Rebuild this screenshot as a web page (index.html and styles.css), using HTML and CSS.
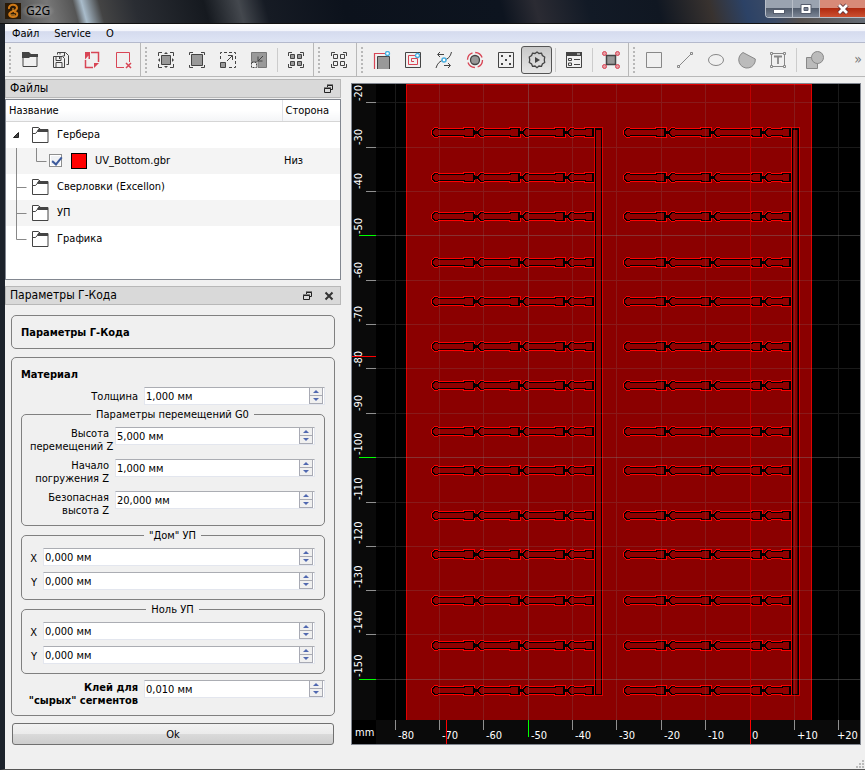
FILE: index.html
```html
<!DOCTYPE html>
<html lang="ru">
<head>
  <meta charset="UTF-8" />
  <meta name="viewport" content="width=device-width, initial-scale=1.0"/>
  <title>G2G</title>
  <link rel="stylesheet" href="styles.css">
</head>
<body>
<div class="window">
  <header class="titlebar">
    <svg class="logo" width="16" height="16" viewBox="0 0 16 16"><rect width="16" height="16" fill="#2a1a08"/><path d="M4 6C3 1 12 0 12 5C12 8 8 8 6 9C3 11 4 14 8 14C13 14 14 9 9 9" fill="none" stroke="#d07a18" stroke-width="2"/><path d="M8 5v3M5 12h5" stroke="#f0a030"/></svg>
    <h1>G2G</h1>
    <div class="win-buttons">
      <button class="win-min" aria-label="Minimize"><svg width="14" height="12"><rect x="1.5" y="6.5" width="11" height="4" fill="#fff" stroke="#555c6c"/></svg></button>
      <button class="win-max" aria-label="Maximize"><svg width="14" height="12"><path d="M2 1.5h10v9H2z" fill="#fff" stroke="#555c6c"/><path d="M5 4.500h4v3H5z" fill="#7c8494" stroke="#555c6c"/></svg></button>
      <button class="win-close" aria-label="Close"><svg width="14" height="12"><path d="M3 2l8 8M11 2l-8 8" stroke="#5a3038" stroke-width="4.500"/><path d="M3 2l8 8M11 2l-8 8" stroke="#fff" stroke-width="2.800"/></svg></button>
    </div>
  </header>

  <nav class="menubar">
    <button>Файл</button>
    <button>Service</button>
    <button>О</button>
  </nav>

  <div class="toolbars">
    <div class="toolbar">
      <span class="handle"></span>
      <button aria-label="Open"><svg width="18" height="18"><path d="M2 5v10.500h14V5.500H2" fill="none" stroke="#444"/><path d="M1 1h7l2 2h7v3H9L8 7H1z" fill="#444"/></svg></button>
      <button aria-label="Save all"><svg width="18" height="18" fill="none" stroke="#444"><path d="M1.500 5.500h9l2 2v9h-11z M4 5.500v4h5v-4 M4 16v-4.500h6V16 M7.500 6v2"/><path d="M5.500 3.500v-2h8l3 3v9h-2 M8 1.500v2 M12.500 2v3h-2"/></svg></button>
      <button aria-label="Save selected"><svg width="18" height="18"><path d="M8 1.500h7.500V11M2.500 9v7.500H10" fill="none" stroke="#d84555" stroke-width="1.500"/><path d="M2 1h5v7H5.500V4.500L2 8.500zM16 12l-5 5v-5z" fill="#d84555"/></svg></button>
      <button aria-label="Close file"><svg width="18" height="18" fill="none" stroke="#d84555"><path d="M15.500 11V1.500h-13v15H10"/><path d="M12 12l5 5M17 12l-5 5" stroke-width="1.500"/></svg></button>
    </div>
    <div class="toolbar">
      <span class="handle"></span>
      <button aria-label="Zoom fit"><svg width="18" height="18"><path d="M1.500 5V1.500H5M13 1.500h3.500V5M16.500 13v3.500H13M5 16.500H1.500V13" fill="none" stroke="#444"/><path d="M4.500 4.500h9v9h-9z" fill="#999" stroke="#444"/><path d="M7 3h4L9 1zM7 15h4l-2 2zM3 7v4L1 9zM15 7v4l2-2z" fill="#444"/></svg></button>
      <button aria-label="Zoom 100%"><svg width="18" height="18"><path d="M1.500 4V1.500H5M13 1.500h3.500V4M16.500 14v2.500H13M5 16.500H1.500V14" fill="none" stroke="#444"/><path d="M3.500 3.500h11v11h-11z" fill="#999" stroke="#444"/></svg></button>
      <button aria-label="Zoom in"><svg width="18" height="18"><path d="M1.500 8V1.500h15v15H9" fill="none" stroke="#444" stroke-dasharray="3 2"/><path d="M1.500 11.500h5v5h-5z" fill="#999" stroke="#444"/><path d="M8 10l5-5M9 4.500h4.500V9" fill="none" stroke="#444"/></svg></button>
      <button aria-label="Zoom out"><svg width="18" height="18"><path d="M1.500 1.500h15v15H8v-6H1.500z" fill="#999" stroke="#777"/><path d="M1.500 11.500h5v5h-5z" fill="#f0f0f0" stroke="#444" stroke-dasharray="2 1"/><path d="M13 5L8 10M8 5.500v4.500h4.500" fill="none" stroke="#444"/></svg></button>
      <span class="sep"></span>
      <button aria-label="Select all"><svg width="18" height="18"><path d="M1.500 5V1.500H5M13 1.500h3.500V5M16.500 13v3.500H13M5 16.500H1.500V13" fill="none" stroke="#444"/><path d="M3.500 3.500h4v4h-4zM10.500 3.500h4v4h-4zM3.500 10.500h4v4h-4zM10.500 10.500h4v4h-4z" fill="#999" stroke="#444"/></svg></button>
    </div>
    <div class="toolbar">
      <span class="handle"></span>
      <button aria-label="Deselect"><svg width="18" height="18" fill="none" stroke="#444"><path d="M1.500 5V1.500H5M13 1.500h3.500V5M16.500 13v3.500H13M5 16.500H1.500V13"/><path d="M3.500 3.500h4v4h-4zM10.500 3.500h4v4h-4zM3.500 10.500h4v4h-4zM10.500 10.500h4v4h-4z"/></svg></button>
    </div>
    <div class="toolbar">
      <span class="handle"></span>
      <button aria-label="Profile"><svg width="18" height="18"><path d="M1.500 18V2.500H13" fill="none" stroke="#d84555" stroke-width="1.200"/><path d="M4.500 18V5.500h12V18z" fill="#999"/><path d="M4.500 18V5.500h12V18" fill="none" stroke="#444"/><circle cx="14.500" cy="2.500" r="2" fill="#fff" stroke="#46aee0" stroke-width="1.300"/></svg></button>
      <button aria-label="Pocket"><svg width="18" height="18" fill="none"><path d="M1.500 1.500h15v15h-15z" stroke="#444"/><path d="M12 4.500H4.500v9h9V7.500H7.500v3H10" stroke="#d84555"/><circle cx="13.500" cy="4.500" r="2" fill="#fff" stroke="#46aee0" stroke-width="1.300"/></svg></button>
      <button aria-label="Raster"><svg width="18" height="18" fill="none" stroke="#444"><path d="M1 17Q3 10 9 9T16.500 1M3 3.500h6M9 14.500h6"/><path d="M5 1L2.500 3.500 5 6M13 12l2.500 2.500L13 17"/><circle cx="9" cy="9" r="2" fill="#fff" stroke="#46aee0" stroke-width="1.500"/></svg></button>
      <button aria-label="Drill"><svg width="18" height="18"><circle cx="9" cy="9" r="7.500" fill="none" stroke="#d84555" stroke-width="1.300" stroke-dasharray="9 2.780"/><circle cx="9" cy="9" r="4.500" fill="#999" stroke="#444" stroke-width="1.300"/></svg></button>
      <button aria-label="Voronoi"><svg width="18" height="18"><path d="M1.500 1.500h15v15h-15z" fill="none" stroke="#444"/><path d="M4 4h2v2H4zM12 4h2v2h-2zM8 8h2v2H8zM4 12h2v2H4zM12 12h2v2h-2z" fill="#444"/></svg></button>
      <button class="pressed" aria-label="G-code properties"><svg width="18" height="18"><path d="M9 1l2 1.500 2.500-.3.900 2.300L16.700 6l-.4 3 .4 2.500-2.300 1.500-.900 2.300-2.500-.3L9 16.700 7 15l-2.500.3-.900-2.300-2.300-1.500.4-2.500-.4-3 2.300-1.500.900-2.300L7 2.500z" fill="none" stroke="#444" stroke-width="1.300"/><path d="M7 6l5 3-5 3z" fill="#444"/></svg></button>
      <span class="sep"></span>
      <button aria-label="Tool base"><svg width="18" height="18"><path d="M1.500 1.500h15v15h-15z" fill="none" stroke="#444"/><path d="M1 1h16v4H1z" fill="#444"/><path d="M12 3h3" stroke="#fff"/><path d="M3.500 7.500h3v2h-3zM3.500 12h3v2.500h-3z" fill="none" stroke="#444"/><path d="M9 8.500h6M9 13.500h6" stroke="#444"/></svg></button>
      <span class="sep"></span>
      <button aria-label="Snap"><svg width="18" height="18"><path d="M4.500 4.500h9v9h-9z" fill="#999" stroke="#444" stroke-width="1.500"/><g fill="#e79aa2" stroke="#d84555"><circle cx="2.500" cy="2.500" r="2"/><circle cx="15.500" cy="2.500" r="2"/><circle cx="2.500" cy="15.500" r="2"/><circle cx="15.500" cy="15.500" r="2"/></g></svg></button>
    </div>
    <div class="toolbar toolbar-last">
      <span class="handle"></span>
      <button aria-label="Rectangle"><svg width="18" height="18"><path d="M1.500 1.500h15v15h-15z" fill="none" stroke="#888"/></svg></button>
      <button aria-label="Line"><svg width="18" height="18" fill="none" stroke="#888"><path d="M3 15L15 3M1.500 14.500h2v2h-2zM14.500 1.500h2v2h-2z"/></svg></button>
      <button aria-label="Ellipse"><svg width="18" height="18"><ellipse cx="9" cy="9" rx="7.500" ry="5.500" fill="none" stroke="#888"/></svg></button>
      <button aria-label="Arc"><svg width="18" height="18"><path d="M5 1.500A8.300 8.300 0 1 0 17.300 8z" fill="#bbb" stroke="#888"/></svg></button>
      <button aria-label="Text"><svg width="18" height="18" fill="none" stroke="#888"><path d="M2.500 2.500h13v13h-13z"/><path d="M1.500 1.500h2v2h-2zM14.500 1.500h2v2h-2zM1.500 14.500h2v2h-2zM14.500 14.500h2v2h-2z" fill="#f0f0f0"/><path d="M5 5.500h8M9 5v8" stroke-width="1.800"/></svg></button>
      <span class="sep"></span>
      <button aria-label="Union"><svg width="18" height="18" fill="#bbb" stroke="#888"><path d="M.5 6.500h11v11H.500z"/><circle cx="11.500" cy="6.500" r="6"/></svg></button>
      <button class="more" aria-label="More tools">»</button>
    </div>
  </div>

  <main class="workspace">
    <aside class="docks">
      <section class="dock-files">
        <h2 class="dock-title"><span>Файлы</span>
          <button aria-label="Float"><svg width="10" height="10" fill="none" stroke="#222"><path d="M3.500 3V1.500h5v4H7M3 1h6M.500 4.500h6v4h-6zM0 4h7"/></svg></button>
        </h2>
        <div class="tree">
          <table>
            <thead><tr><th>Название</th><th class="side">Сторона</th></tr></thead>
            <tbody>
              <tr><td><div class="node"><svg class="branch" width="26" height="26"><path d="M7.500 15.500h5v-5z" fill="#444" stroke="#222"/></svg><svg class="folder" width="17" height="16"><use href="#folder"/></svg>Гербера</div></td><td></td></tr>
              <tr><td><div class="node"><svg class="branch-child" width="43" height="26"><path d="M10.500 0v26M30.500 0v13.500h10" fill="none" stroke="#888"/></svg><input type="checkbox" id="f1" checked><span class="swatch"></span><label for="f1">UV_Bottom.gbr</label></div></td><td>Низ</td></tr>
              <tr><td><div class="node"><svg class="branch" width="26" height="26"><path d="M10.500 0v26M10.500 13.500h10" stroke="#888"/></svg><svg class="folder" width="17" height="16"><use href="#folder"/></svg>Сверловки (Excellon)</div></td><td></td></tr>
              <tr><td><div class="node"><svg class="branch" width="26" height="26"><path d="M10.500 0v26M10.500 13.500h10" stroke="#888"/></svg><svg class="folder" width="17" height="16"><use href="#folder"/></svg>УП</div></td><td></td></tr>
              <tr><td><div class="node"><svg class="branch" width="26" height="26"><path d="M10.500 0v13.500h10" fill="none" stroke="#888"/></svg><svg class="folder" width="17" height="16"><use href="#folder"/></svg>Графика</div></td><td></td></tr>
            </tbody>
          </table>
        </div>
      </section>

      <section class="dock-params">
        <h2 class="dock-title"><span>Параметры Г-Кода</span>
          <button aria-label="Float"><svg width="10" height="10" fill="none" stroke="#222"><path d="M3.500 3V1.500h5v4H7M3 1h6M.500 4.500h6v4h-6zM0 4h7"/></svg></button>
          <button aria-label="Close"><svg width="10" height="10"><path d="M1.500 1.500l7 7M8.500 1.500l-7 7" stroke="#333" stroke-width="2"/></svg></button>
        </h2>
        <form class="params" onsubmit="return false">
          <div class="box box-name"><h3>Параметры Г-Кода</h3></div>
          <div class="box box-material">
            <h3>Материал</h3>
            <div class="field field-wide">
              <label for="thick">Толщина</label>
              <div class="spin"><input id="thick" type="text" value="1,000 мм"><div class="steps"><button type="button" aria-label="Up"></button><button type="button" aria-label="Down"></button></div></div>
            </div>
            <fieldset class="g0">
              <legend>Параметры перемещений G0</legend>
              <div class="field">
                <label for="clear">Высота<br>перемещений Z</label>
                <div class="spin"><input id="clear" type="text" value="5,000 мм"><div class="steps"><button type="button" aria-label="Up"></button><button type="button" aria-label="Down"></button></div></div>
              </div>
              <div class="field">
                <label for="plunge">Начало<br>погружения Z</label>
                <div class="spin"><input id="plunge" type="text" value="1,000 мм"><div class="steps"><button type="button" aria-label="Up"></button><button type="button" aria-label="Down"></button></div></div>
              </div>
              <div class="field">
                <label for="safe">Безопасная<br>высота Z</label>
                <div class="spin"><input id="safe" type="text" value="20,000 мм"><div class="steps"><button type="button" aria-label="Up"></button><button type="button" aria-label="Down"></button></div></div>
              </div>
            </fieldset>
            <fieldset class="point">
              <legend>"Дом" УП</legend>
              <div class="field">
                <label for="homeX">X</label>
                <div class="spin"><input id="homeX" type="text" value="0,000 мм"><div class="steps"><button type="button" aria-label="Up"></button><button type="button" aria-label="Down"></button></div></div>
              </div>
              <div class="field">
                <label for="homeY">Y</label>
                <div class="spin"><input id="homeY" type="text" value="0,000 мм"><div class="steps"><button type="button" aria-label="Up"></button><button type="button" aria-label="Down"></button></div></div>
              </div>
            </fieldset>
            <fieldset class="point">
              <legend>Ноль УП</legend>
              <div class="field">
                <label for="zeroX">X</label>
                <div class="spin"><input id="zeroX" type="text" value="0,000 мм"><div class="steps"><button type="button" aria-label="Up"></button><button type="button" aria-label="Down"></button></div></div>
              </div>
              <div class="field">
                <label for="zeroY">Y</label>
                <div class="spin"><input id="zeroY" type="text" value="0,000 мм"><div class="steps"><button type="button" aria-label="Up"></button><button type="button" aria-label="Down"></button></div></div>
              </div>
            </fieldset>
            <div class="field field-wide field-glue">
              <label for="glue">Клей для<br>"сырых" сегментов</label>
              <div class="spin"><input id="glue" type="text" value="0,010 мм"><div class="steps"><button type="button" aria-label="Up"></button><button type="button" aria-label="Down"></button></div></div>
            </div>
          </div>
          <button class="ok">Ok</button>
        </form>
      </section>
    </aside>

    <div class="viewer">
      <svg class="board">
        <defs>
          <g id="folder"><path d="M.500 15.500V.500h6l2 2h7.500v13z" fill="#fff" stroke="#444"/><path d="M7 1l1.500 1H16v3H6L5 4z" fill="#444"/><path d="M.500 6.500h3l3.500-4" fill="none" stroke="#444"/></g>
          <!-- red outline, black contour inside it, dark red core -->
          <g id="head">
            <path d="M8 -5H32V-6H44V5H32V4H8L6 5H3L0 2V-3L3 -6H6z" fill="#f00"/>
            <path d="M8 -4H33V-5H43V4H33V3H8L6 4H3L1 2V-3L3 -5H6z"/>
            <path d="M8 -3H34V-4H42V3H34V2H8L6 3H4L2 1V-2L4 -4H6z" fill="#900000"/>
          </g>
          <g id="head-long">
            <path d="M8 -5H38V-6H50V5H38V4H8L6 5H3L0 2V-3L3 -6H6z" fill="#f00"/>
            <path d="M8 -4H39V-5H49V4H39V3H8L6 4H3L1 2V-3L3 -5H6z"/>
            <path d="M8 -3H40V-4H48V3H40V2H8L6 3H4L2 1V-2L4 -4H6z" fill="#900000"/>
          </g>
          <g id="head-short">
            <path d="M8 -5H17V-6H28V5H17V4H8L6 5H3L0 2V-3L3 -6H6z" fill="#f00"/>
            <path d="M8 -4H18V-5H28V4H18V3H8L6 4H3L1 2V-3L3 -5H6z"/>
            <path d="M8 -3H19V-4H25V3H19V2H8L6 3H4L2 1V-2L4 -4H6z" fill="#900000"/>
          </g>
          <path id="tie" d="M-1 -4L2 -2 5 -3V2L2 1 -1 3z"/>
          <g id="row">
            <use href="#head" x="79"/><use href="#head" x="125"/><use href="#head" x="170"/><use href="#head-short" x="215"/>
            <use href="#tie" x="122"/><use href="#tie" x="167"/><use href="#tie" x="212"/>
            <use href="#head" x="271"/><use href="#head" x="316"/><use href="#head-long" x="361"/><use href="#head-short" x="412"/>
            <use href="#tie" x="313"/><use href="#tie" x="358"/><use href="#tie" x="409"/>
          </g>
        </defs>
        <rect width="100%" height="100%"/>
        <rect x="54" y="0" width="406" height="636" fill="#8b0000"/>
        <path d="M54.500 636V.500H459.500V636" fill="none" stroke="#e00000"/>
        <use href="#row" y="49"/><use href="#row" y="94"/><use href="#row" y="133"/><use href="#row" y="179"/>
        <use href="#row" y="218"/><use href="#row" y="263"/><use href="#row" y="302"/><use href="#row" y="348"/>
        <use href="#row" y="387"/><use href="#row" y="432"/><use href="#row" y="471"/><use href="#row" y="517"/>
        <use href="#row" y="562"/><use href="#row" y="607"/>
        <!-- feed spines -->
        <path d="M242 43h9v569h-9zM439 43h9v569h-9z" fill="#e00000"/>
        <path d="M243 44h7v567h-7zM440 44h7v567h-7z"/>
        <path d="M244 46h5v564h-5zM441 46h4v564h-4z" fill="#900000"/>
        <path d="M445 46h1v564h-1z" fill="#400000"/>
        <path d="M43 0h1v636h-1zM87 0h1v636h-1zM131 0h1v636h-1zM220 0h1v636h-1zM264 0h1v636h-1zM309 0h1v636h-1zM353 0h1v636h-1zM442 0h1v636h-1zM486 0h1v636h-1zM24 18h484v1H24zM24 63h484v1H24zM24 107h484v1H24zM24 196h484v1H24zM24 240h484v1H24zM24 284h484v1H24zM24 329h484v1H24zM24 418h484v1H24zM24 462h484v1H24zM24 506h484v1H24zM24 550h484v1H24z" fill="#808080" fill-opacity=".2"/>
        <path d="M176 0h1v636h-1zM24 151h484v1H24zM24 373h484v1H24zM24 595h484v1H24z" fill="#808080" fill-opacity=".38"/>
        <path d="M398 0h1v636h-1z" fill="#c00000"/>

        <!-- rulers -->
        <path d="M0 0h24v636h484v24H0z" fill="#0a0a0a"/>
        <rect y="636" width="24" height="24"/>
        <path d="M14 18h10v1H14zM14 63h10v1H14zM14 107h10v1H14zM14 196h10v1H14zM14 240h10v1H14zM14 284h10v1H14zM14 329h10v1H14zM14 418h10v1H14zM14 462h10v1H14zM14 506h10v1H14zM14 550h10v1H14zM43 636h1v10h-1zM87 636h1v10h-1zM131 636h1v10h-1zM220 636h1v10h-1zM264 636h1v10h-1zM309 636h1v10h-1zM353 636h1v10h-1zM442 636h1v10h-1zM486 636h1v10h-1z" fill="#909090"/>
        <path d="M7 151h17v1H7zM7 373h17v1H7zM7 595h17v1H7zM176 636h1v17h-1z" fill="#0f0"/>
        <g class="scale">
          <text x="3" y="652">mm</text>
          <text x="46" y="655">-80</text><text x="90" y="655">-70</text><text x="134" y="655">-60</text><text x="179" y="655">-50</text>
          <text x="223" y="655">-40</text><text x="267" y="655">-30</text><text x="312" y="655">-20</text><text x="356" y="655">-10</text>
          <text x="400" y="655">0</text><text x="445" y="655">+10</text><text x="485" y="655">+20</text>
          <text transform="translate(10 17) rotate(-90)">-20</text>
          <text transform="translate(10 61) rotate(-90)">-30</text>
          <text transform="translate(10 105) rotate(-90)">-40</text>
          <text transform="translate(10 150) rotate(-90)">-50</text>
          <text transform="translate(10 194) rotate(-90)">-60</text>
          <text transform="translate(10 238) rotate(-90)">-70</text>
          <text transform="translate(10 283) rotate(-90)">-80</text>
          <text transform="translate(10 327) rotate(-90)">-90</text>
          <text transform="translate(10 371) rotate(-90)">-100</text>
          <text transform="translate(10 416) rotate(-90)">-110</text>
          <text transform="translate(10 460) rotate(-90)">-120</text>
          <text transform="translate(10 504) rotate(-90)">-130</text>
          <text transform="translate(10 549) rotate(-90)">-140</text>
          <text transform="translate(10 593) rotate(-90)">-150</text>
        </g>
        <path d="M0 272h24v1H0zM94 636h1v24h-1zM398 636h1v24h-1z" fill="#f00"/>
      </svg>
    </div>
  </main>
  <footer class="statusbar">
    <svg width="10" height="10"><path d="M7 1h2v2H7zM7 4h2v2H7zM4 4h2v2H4zM7 7h2v2H7zM4 7h2v2H4zM1 7h2v2H1z" fill="#bbb"/></svg>
  </footer>
</div>
</body>
</html>
```

FILE: styles.css
```css
* {
  box-sizing: border-box;
}
body {
  margin: 0;
  font-family: "DejaVu Sans Condensed", "Noto Sans", sans-serif;
  font-size: 11px;
  line-height: 13px;
  color: #000;
  background: #f0f0f0;
}
h1, h2, h3 {
  margin: 0;
  font-size: 11px;
  font-weight: normal;
}
button, input {
  font: inherit;
  color: inherit;
  margin: 0;
  padding: 0;
  border: none;
  background: none;
}
svg {
  display: block;
  flex: none;
}
.window {
  display: flex;
  flex-direction: column;
  min-height: 100vh;
  border-left: 5px solid #1c222b;
  border-bottom: 1px solid #555;
}

/* title bar */
.titlebar {
  display: flex;
  align-items: flex-start;
  height: 24px;
  margin-left: -5px;
  padding-left: 5px;
  border-bottom: 1px solid #111;
  background: linear-gradient(75deg, #3c3c3c 0, #777 6%, #555 9%, #a9bccb 10%, #444 12%, #2a2d33 16%, #15191f 24%, #44484e 28%, #161b24 31%, #0c121c 40%, #0d141f 58%, #2b2b33 62%, #121a26 68%, #101722 76%, #38322f 82%, #2c4266 86%, #3a4a66 89%, #55504e 92%, #666e78 100%);
}
.logo {
  margin-top: 3px;
}
.titlebar h1 {
  margin: 3px 0 0;
  padding: 0 5px;
  font-family: "Noto Sans", sans-serif;
  font-size: 12px;
  line-height: 16px;
  background: radial-gradient(closest-side, #aaa, transparent);
}
.win-buttons {
  display: flex;
  margin-left: auto;
  height: 18px;
  border: 1px solid #b8bec8;
  border-top: none;
  border-right: none;
  border-radius: 0 0 0 4px;
  overflow: hidden;
}
.win-buttons button {
  display: flex;
  align-items: center;
  justify-content: center;
  width: 27px;
  border-right: 1px solid #b8bec8;
  background: linear-gradient(#9aa3b0 45%, #525c6c 50%, #7a8494);
}
.win-buttons .win-close {
  width: 45px;
  border: none;
  background: linear-gradient(#d88a78 45%, #b02a10 50%, #cc5030);
}

/* menu and toolbars */
.menubar {
  display: flex;
  height: 19px;
  padding: 1px 0 0 7px;
  gap: 15px;
  border-bottom: 1px solid #b4b9cc;
  background: linear-gradient(#fff 0, #f2f4fb 40%, #d5dbee 42%, #dfe5f5);
}
.toolbars {
  display: flex;
  height: 34px;
  border-bottom: 1px solid #b8b8b8;
}
.toolbar {
  display: flex;
  align-items: center;
  padding-right: 1px;
  border-right: 1px solid #b8b8b8;
}
.toolbar-last {
  flex: 1;
  border: none;
}
.toolbar button {
  display: flex;
  align-items: center;
  justify-content: center;
  width: 31px;
  height: 28px;
}
.toolbar .pressed {
  border: 1px solid #555;
  border-radius: 3px;
  background: linear-gradient(#c8c8c8, #e6e6e6);
}
.toolbar .more {
  width: 12px;
  margin-left: auto;
  font-size: 14px;
  color: #777;
}
.handle {
  width: 9px;
  height: 26px;
  background: linear-gradient(#b8b8b8 50%, transparent 50%) 4px 0 / 2px 4px repeat-y;
}
.sep {
  width: 6px;
  height: 24px;
  background: linear-gradient(#ccc, #ccc) 3px 0 / 1px 24px no-repeat;
}
.toolbar:not(.toolbar-last) {
  padding-right: 2px;
}

/* docks */
.workspace {
  display: flex;
  flex: 1;
  gap: 10px;
  padding: 2px 4px 0 0;
}
.docks {
  display: flex;
  flex-direction: column;
  width: 336px;
  gap: 6px;
}
.dock-title {
  display: flex;
  align-items: center;
  gap: 11px;
  height: 19px;
  padding: 0 6px 0 4px;
  font-size: 12px;
  border: 1px solid #b8b8b8;
  background: #d9d9d9;
}
.dock-title span {
  flex: 1;
}
.tree {
  height: 181px;
  margin-top: 1px;
  border: 1px solid #828790;
  background: #fff;
}
.tree table {
  width: 100%;
  border-collapse: collapse;
  table-layout: fixed;
}
.tree th {
  height: 21px;
  padding: 0 3px;
  font-weight: normal;
  text-align: left;
  border-bottom: 1px solid #d5d5d5;
  background: linear-gradient(#fff 50%, #f4f5f7);
}
.tree .side {
  width: 58px;
  border-left: 1px solid #e0e2e6;
}
.tree td {
  height: 26px;
  padding: 0 2px;
}
.tree td:first-child {
  padding: 0;
}
.tree tr:nth-child(even) td {
  background: #f4f4f4;
}
.node {
  display: flex;
  align-items: center;
  height: 26px;
}
.folder {
  margin-right: 8px;
}
.node input {
  appearance: none;
  width: 13px;
  height: 13px;
  border: 1px solid #8e8f8f;
  background: #f0f2f5;
  box-shadow: inset 0 0 0 1px #fff;
}
.node input:checked::before {
  content: "";
  display: block;
  width: 4px;
  height: 8px;
  margin: 0 0 0 4px;
  border: solid #3c5a9c;
  border-width: 0 2px 2px 0;
  transform: rotate(40deg);
}
.swatch {
  width: 16px;
  height: 16px;
  margin: 0 8px 0 9px;
  border: 1px solid #000;
  background: #f00;
}

/* g-code form */
.params {
  padding: 10px 6px 0;
}
.box {
  padding: 10px 9px 8px;
  border: 1px solid #808080;
  border-radius: 5px;
}
.box h3 {
  font-weight: bold;
}
.box-name {
  height: 34px;
  margin-bottom: 8px;
}
.field {
  display: flex;
  gap: 6px;
}
.field label {
  width: 79px;
  text-align: right;
  white-space: nowrap;
}
.field-wide {
  margin-top: 6px;
}
.field-wide label {
  width: 117px;
}
.box-material > .field:first-of-type label {
  padding-top: 3px;
}
.field-glue label {
  padding-top: 1px;
  font-weight: bold;
}
.spin {
  display: flex;
  flex: 1;
  height: 18px;
  border: 1px solid #e3e6ee;
  border-top-color: #abadb3;
  background: #fff;
}
.spin input {
  flex: 1;
  min-width: 0;
  padding-left: 1px;
}
.steps {
  display: flex;
  flex-direction: column;
  width: 15px;
}
.steps button {
  display: flex;
  align-items: center;
  justify-content: center;
  height: 8px;
  margin-right: 1px;
  border: solid #a8aab4;
  border-width: 0 1px 1px;
  background: #f0f0f0;
}
.steps button::before {
  content: "";
  border: solid transparent;
  border-width: 0 3px 3px;
  border-bottom-color: #5068b0;
}
.steps button:last-child::before {
  border-width: 3px 3px 0;
  border-top-color: #5068b0;
}
fieldset {
  min-width: 0;
  margin: 0;
  border: 1px solid #808080;
  border-radius: 5px;
}
legend {
  margin: 0 auto;
  padding: 0 5px;
}
.g0 {
  display: flex;
  flex-direction: column;
  gap: 6px;
  margin-top: 3px;
  padding: 6px 9px 8px 8px;
}
.point {
  margin-top: 3px;
  padding: 6px 9px 9px 8px;
}
.point .field + .field {
  margin-top: 6px;
}
.point label {
  width: 7px;
  padding-top: 4px;
}
.ok {
  display: block;
  width: calc(100% - 2px);
  height: 22px;
  margin: 7px 1px 0;
  border: 1px solid #707070;
  border-radius: 3px;
  background: linear-gradient(#f2f2f2 0, #ebebeb 48%, #dadada 50%, #cdcdcd);
}

/* viewer */
.viewer {
  flex: 1;
  display: flex;
  margin-top: 4px;
  border: 1px solid #828790;
}
.board {
  flex: 1;
  width: 100%;
  height: auto;
  shape-rendering: crispEdges;
}
.scale {
  fill: #fff;
  font-size: 11px;
}
.statusbar {
  display: flex;
  align-items: flex-end;
  justify-content: flex-end;
  height: 24px;
}
```
